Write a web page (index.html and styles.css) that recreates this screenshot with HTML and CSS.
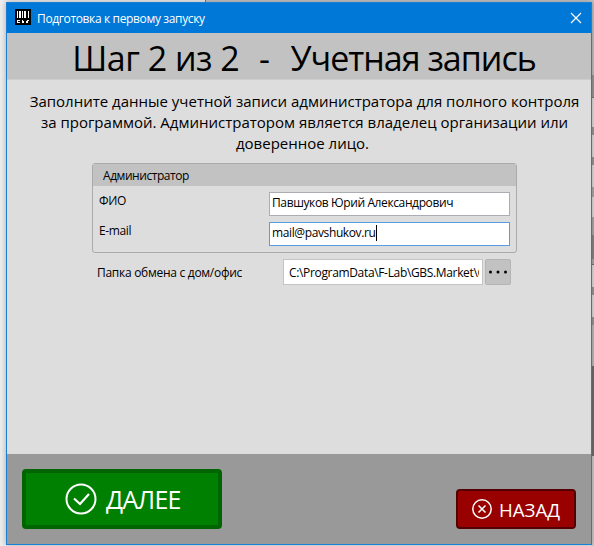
FILE: index.html
```html
<!DOCTYPE html>
<html lang="ru">
<head>
<meta charset="utf-8">
<title>Подготовка к первому запуску</title>
<link rel="stylesheet" href="styles.css">
</head>
<body>
<div class="backdrop">
  <div class="backdrop-top"></div>
  <div class="backdrop-side"></div>
</div>
<main class="window">
  <header class="titlebar">
    <svg class="app-icon" width="16" height="16" viewBox="0 0 16 16" shape-rendering="crispEdges">
      <rect width="16" height="16" rx="1" fill="#000"/>
      <path fill="#fff" d="M2 2h1v7H2zM4 2h2v7H4zM7 2h1v7H7zM9 2h2v7H9zM13 2h1v7h-1z"/>
      <path fill="#fff" d="M2 11h3v1H2zM2 12h1v2H2zM3 13h2v1H3zM7 11h1v3H7zM8 12h1v2H8zM12 11h2v1h-2zM11 12h2v1h-2zM11 13h2v1h-2z"/>
    </svg>
    <span class="caption">Подготовка к первому запуску</span>
    <svg class="close" width="12" height="12" viewBox="0 0 12 12"><path d="M1 1l10 10M11 1L1 11" stroke="#fff" stroke-width="1.200"/></svg>
  </header>
  <h1 class="step"><span>Шаг 2 из 2</span><span class="dash">&nbsp; -&nbsp; </span><span class="name">Учетная запись</span></h1>
  <section class="content">
    <p class="intro">Заполните данные учетной записи администратора для полного контроля<br>за программой. Администратором является владелец организации или<br><span class="last-line">доверенное лицо.</span></p>
    <div class="group">
      <div class="group-head">Администратор</div>
      <div class="row"><label>ФИО</label><div class="input">Павшуков Юрий Александрович</div></div>
      <div class="row"><label>E-mail</label><div class="input focused">mail@pavshukov.ru<i class="caret"></i></div></div>
    </div>
    <div class="folder">
      <label>Папка обмена с дом/офис</label>
      <div class="path"><span>C:\ProgramData\F-Lab\GBS.Market\C</span></div>
      <button class="more"><svg width="20" height="4" viewBox="0 0 20 4"><circle cx="2.500" cy="2" r="1.500"/><circle cx="10" cy="2" r="1.500"/><circle cx="17.500" cy="2" r="1.500"/></svg></button>
    </div>
  </section>
  <footer class="footer">
    <button class="next">
      <svg width="32" height="32" viewBox="0 0 32 32" fill="none" stroke="#fff"><circle cx="16" cy="16" r="14.500" stroke-width="2"/><path d="M9 15.500l6 5.500 9-10" stroke-width="2.200"/></svg>
      <span>ДАЛЕЕ</span>
    </button>
    <button class="back">
      <svg width="20" height="20" viewBox="0 0 20 20" fill="none" stroke="#fff"><circle cx="10" cy="10" r="9.200" stroke-width="1.500"/><path d="M6.500 6.500l7 7M13.500 6.500l-7 7" stroke-width="1.500"/></svg>
      <span>НАЗАД</span>
    </button>
  </footer>
</main>
</body>
</html>
```

FILE: styles.css
```css
* { box-sizing: border-box; }
body {
  margin: 0;
  width: 594px;
  height: 546px;
  overflow: hidden;
  background: #ededed;
  font-family: "Open Sans", "Noto Sans", sans-serif;
  font-size: 12px;
  color: #000;
}
.backdrop { position: absolute; inset: 0; }
.backdrop-top {
  width: 389px;
  height: 2px;
  margin-left: auto;
  border-left: 1px solid #777;
  background: #c4c4c4;
}
.backdrop-side {
  width: 3px;
  height: 544px;
  margin-left: auto;
  background: linear-gradient(#c0c0c0 73px, #999 73px 95px, #777 95px 96px, #ddd 96px 125px, #999 125px 133px, #ddd 133px 155px, #999 155px 163px, #ddd 163px 185px, #aaa 185px 195px, #ddd 195px 215px, #aaa 215px 233px, #888 233px 257px, #aaa 257px 262px, #777 262px 263px, #ddd 263px 285px, #999 285px 293px, #ddd 293px 315px, #999 315px 323px, #bbb 323px 364px, #707070 364px 454px, #ccc 454px);
}
.window {
  position: relative;
  display: flex;
  flex-direction: column;
  width: 586px;
  height: 543px;
  margin: 2px 0 0 6px;
  border: 1px solid #1a80d6;
  background: #ddd;
  box-shadow: 0 0 6px rgba(0, 0, 0, .3);
}
.titlebar {
  display: flex;
  align-items: center;
  height: 30px;
  padding: 0 9px 0 8px;
  background: #0078d7;
  color: #fff;
}
.app-icon { margin-top: -2px; }
.caption { margin-left: 6px; letter-spacing: -.36px; }
.close { margin-left: auto; margin-top: -1px; }
.step {
  display: flex;
  justify-content: center;
  align-items: center;
  height: 47px;
  margin: 0;
  padding: 4px 0 0 10px;
  background: #c2c2c2;
  border-bottom: 1px solid #cdcdcd;
  font-size: 34px;
  font-weight: 400;
  line-height: 42px;
  letter-spacing: -.5px;
  white-space: pre;
}
.dash { letter-spacing: 1px; }
.name { letter-spacing: -1px; }
.content { flex: 1; }
.intro {
  margin: 11px 0 0;
  padding-left: 11px;
  text-align: center;
  font-size: 15px;
  line-height: 21px;
  white-space: nowrap;
}
.last-line { margin-right: 4px; }
.group {
  width: 425px;
  height: 90px;
  margin: 9px 0 0 85px;
  border: 1px solid #aaa;
  border-radius: 3px;
}
.group-head {
  height: 22px;
  margin-bottom: 6px;
  padding-left: 10px;
  background: #c2c2c2;
  line-height: 23px;
  letter-spacing: -.45px;
}
.row {
  display: flex;
  justify-content: space-between;
  height: 24px;
  margin-bottom: 6px;
  padding: 0 6px;
  line-height: 18px;
  letter-spacing: -.38px;
}
.input {
  width: 241px;
  height: 24px;
  padding: 1px 2px 0;
  border: 1px solid #abadb3;
  background: #fff;
  white-space: nowrap;
}
.input.focused { border-color: #569de5; }
.caret {
  display: inline-block;
  width: 1px;
  height: 16px;
  background: #000;
  vertical-align: -4px;
}
.folder {
  display: flex;
  align-items: center;
  width: 414px;
  height: 26px;
  margin: 6px 0 0 90px;
}
.folder label { width: 186px; white-space: nowrap; letter-spacing: -.28px; }
.path {
  width: 200px;
  height: 26px;
  padding: 0 3px 0 5px;
  border: 1px solid #c4c4c4;
  background: #fff;
  line-height: 25px;
  letter-spacing: -.34px;
}
.path span { display: block; overflow: hidden; white-space: nowrap; }
.more {
  display: flex;
  align-items: center;
  justify-content: center;
  width: 26px;
  height: 26px;
  margin-left: 2px;
  padding: 0;
  border: 1px solid #b4b4b4;
  border-radius: 2px;
  background: #c2c2c2;
}
.footer {
  display: flex;
  justify-content: space-between;
  align-items: flex-end;
  height: 90px;
  padding: 0 15px 15px;
  background: #999;
}
.next, .back {
  display: flex;
  align-items: center;
  padding: 0;
  color: #fff;
  font-family: inherit;
}
.next {
  width: 200px;
  height: 60px;
  padding-left: 39px;
  border: 4px solid #006400;
  border-radius: 4px;
  background: #008000;
  font-size: 25px;
}
.next span { margin-left: 9px; letter-spacing: -.7px; }
.back {
  width: 120px;
  height: 40px;
  padding-left: 14px;
  border: 2px solid #550000;
  border-radius: 4px;
  background: #990000;
  font-size: 18.7px;
}
.back span { margin: 1px 0 0 7px; }
```
